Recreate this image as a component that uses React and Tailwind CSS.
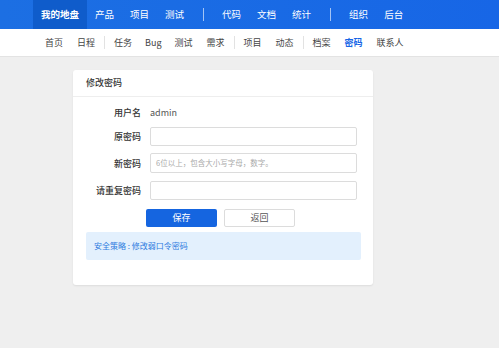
const font = { fontFamily: '"Noto Sans CJK SC", "Noto Sans", sans-serif' }

const topItems = ['产品', '项目', '测试', '|', '代码', '文档', '统计', '|', '组织', '后台']
const subItems = ['首页', '日程', '|', '任务', 'Bug', '测试', '需求', '|', '项目', '动态', '|', '档案', '密码', '联系人']

function FormRow({ label, children }) {
  return (
    <div className="flex items-center h-[19px]">
      <div className="w-[68px] text-right text-[9px] leading-none text-[#333] font-medium shrink-0">{label}</div>
      <div className="ml-[9px] flex-1 flex items-center">{children}</div>
    </div>
  )
}

export default function App() {
  return (
    <div className="w-[499px] h-[348px] bg-[#efefef] overflow-hidden" style={font}>
      {/* top nav */}
      <div className="h-[29px] bg-gradient-to-r from-[#1c6fe3] to-[#1766e6] flex items-stretch pl-[33px] text-white text-[9.5px] leading-none">
        <div className="px-[8px] flex items-center bg-[#0f5ccb] font-bold">我的地盘</div>
        {topItems.map((t, i) =>
          t === '|' ? (
            <div key={i} className="w-[22px] flex items-center justify-center">
              <div className="w-px h-[13px] bg-white/60" />
            </div>
          ) : (
            <div key={i} className="px-[8px] flex items-center">{t}</div>
          )
        )}
      </div>

      {/* sub nav */}
      <div className="h-[28px] bg-white border-b border-[#e3e3e3] flex items-center pl-[38px] text-[9px] text-[#444] leading-none">
        {subItems.map((t, i) =>
          t === '|' ? (
            <div key={i} className="w-[5px] flex justify-center">
              <div className="w-px h-[13px] bg-[#e2e2e2]" />
            </div>
          ) : (
            <div
              key={i}
              className={`${t === 'Bug' ? 'px-[6px]' : 'px-[7px]'} ${t === '密码' ? 'text-[#1766e6] font-bold' : ''}`}
            >
              {t}
            </div>
          )
        )}
      </div>

      {/* card */}
      <div className="ml-[73px] mt-[13px] w-[300px] h-[215px] bg-white rounded-[3px] shadow-[0_1px_2px_rgba(0,0,0,0.08)]">
        <div className="h-[27px] border-b border-[#eeeeee] flex items-center pl-[13px] text-[9px] text-[#333] font-medium">修改密码</div>
        <div className="pr-[16px] pt-[6px]">
          <FormRow label="用户名">
            <span className="text-[9px] leading-none text-[#555]">admin</span>
          </FormRow>
          <div className="mt-[4.5px] flex flex-col gap-[8px]">
            <FormRow label="原密码">
              <div className="w-full h-[19px] border border-[#dcdcdc] rounded-[2px]" />
            </FormRow>
            <FormRow label="新密码">
              <div className="w-full h-[20px] border border-[#dcdcdc] rounded-[2px] flex items-center pl-[5px] text-[7.5px] text-[#aaa]">6位以上，包含大小写字母，数字。</div>
            </FormRow>
            <FormRow label="请重复密码">
              <div className="w-full h-[19px] border border-[#dcdcdc] rounded-[2px]" />
            </FormRow>
          </div>
        </div>
        <div className="flex gap-[7px] pl-[73px] mt-[9px]">
          <div className="w-[71px] h-[18px] bg-[#1565e0] rounded-[2px] text-white text-[9px] flex items-center justify-center">保存</div>
          <div className="w-[71px] h-[18px] border border-[#dcdcdc] rounded-[2px] text-[#555] text-[9px] flex items-center justify-center">返回</div>
        </div>
        <div className="ml-[13px] mr-[12px] mt-[5px] h-[28px] bg-[#e3f0fd] rounded-[2px] flex items-center pl-[8px] text-[8px] text-[#2e7be0]">
          安全策略 : 修改弱口令密码
        </div>
      </div>
    </div>
  )
}
